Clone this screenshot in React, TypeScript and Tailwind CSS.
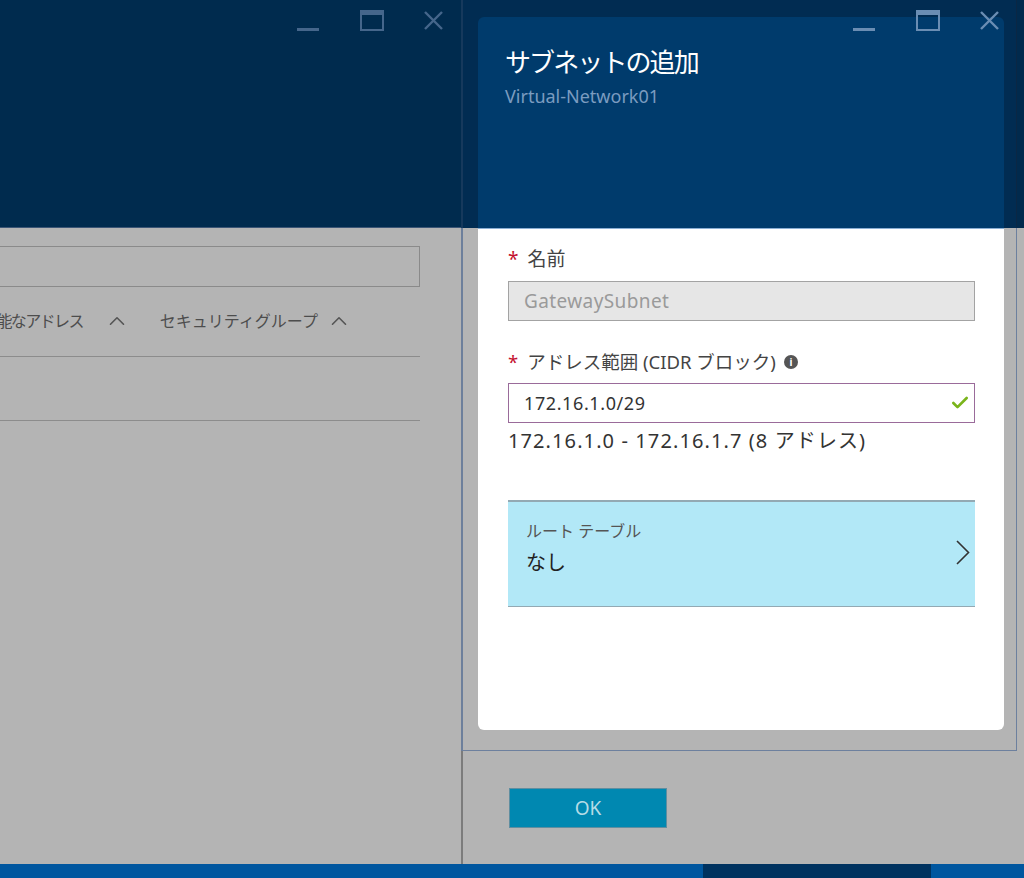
import { ChevronUp, Check } from "lucide-react";

const FONT = "font-['Noto_Sans','Noto_Sans_CJK_JP',sans-serif]";

type Tone = { bar: string; box: string; x: string };

const LEFT_TONE: Tone = {
  bar: "bg-[#45668b]",
  box: "border-[#45668b]",
  x: "text-[#45668b]",
};

const RIGHT_TONE: Tone = {
  bar: "bg-[#6a8db3]",
  box: "border-[#6a8db3]",
  x: "text-[#6a8db3]",
};

function WindowControls({ tone }: { tone: Tone }) {
  return (
    <div className="flex items-start">
      <div className="flex h-[32px] w-[63px] items-end pb-[1px]">
        <div className={`h-[3px] w-[22px] ${tone.bar}`} />
      </div>
      <div className="flex h-[32px] w-[63px] items-start pt-[10px]">
        <div className={`h-[21px] w-[24px] border-2 border-t-[5px] ${tone.box}`} />
      </div>
      <div className="pt-[10px]">
        <svg width="21" height="21" viewBox="0 0 21 21" className={tone.x}>
          <path d="M2 2 L19 19 M19 2 L2 19" stroke="currentColor" strokeWidth="2.4" fill="none" />
        </svg>
      </div>
    </div>
  );
}

function LeftBlade() {
  return (
    <div className="flex w-[461px] shrink-0 flex-col">
      <div className="flex h-[228px] justify-end border-b border-[#3c5676] bg-[#002b4e] pr-[17px]">
        <WindowControls tone={LEFT_TONE} />
      </div>
      <div className="flex-1 bg-[#b4b4b4] pr-[41px] pt-[18px]">
        <div className="h-[41px] border border-l-0 border-[#8a8a8a]" />
        <div className="mt-[22px] flex h-[24px] items-center overflow-hidden text-[16px] text-[#4d4d4d]">
          <span className="-ml-[18px] whitespace-nowrap tracking-[-1.6px]">可能なアドレス</span>
          <ChevronUp className="ml-[21px] h-[26px] w-[26px] shrink-0 text-[#555]" strokeWidth={1.5} />
          <span className="ml-[30px] whitespace-nowrap">セキュリティグループ</span>
          <ChevronUp className="ml-[8px] h-[26px] w-[26px] shrink-0 text-[#555]" strokeWidth={1.5} />
        </div>
        <div className="mt-[23px] h-px bg-[#8c8c8c]" />
        <div className="mt-[63px] h-px bg-[#8c8c8c]" />
      </div>
    </div>
  );
}

function SpotlightCard() {
  return (
    <div className="absolute left-[15px] top-[17px] flex h-[713px] w-[526px] flex-col overflow-hidden rounded-[6px]">
      <div className="h-[211px] bg-[#003b6c] pl-[27px] pt-[27px]">
        <h1 className="text-[26px] leading-[37px] tracking-[-1.9px] text-white">サブネットの追加</h1>
        <p className="mt-[3px] text-[18px] leading-[24px] text-[#7b9cc0]">Virtual-Network01</p>
      </div>
      <div className="flex flex-1 flex-col border-t border-[#8aaed4] bg-white pl-[30px] pr-[29px] pt-[19px]">
        <div className="flex h-[22px] items-center text-[19px] text-[#444]">
          <span className="mr-[9px] text-[#c4122f]">*</span>
          <span>名前</span>
        </div>
        <div className="mt-[11px] flex h-[40px] items-center border border-[#a3a3a3] bg-[#e6e6e6] pl-[15px] text-[19px] tracking-[0.4px] text-[#9a9a9a]">
          GatewaySubnet
        </div>
        <div className="mt-[30px] flex h-[22px] items-center text-[18.5px] text-[#444]">
          <span className="mr-[9px] text-[#c4122f]">*</span>
          <span>アドレス範囲 (CIDR ブロック)</span>
          <span className="ml-[8px] flex h-[14px] w-[14px] items-center justify-center rounded-full bg-[#555] text-[10px] font-bold leading-none text-white">
            i
          </span>
        </div>
        <div className="mt-[10px] flex h-[40px] items-center justify-between border border-[#9a6b9a] bg-white pl-[15px] pr-[4px] text-[18px] tracking-[0.6px] text-[#333]">
          <span>172.16.1.0/29</span>
          <Check className="h-[20px] w-[20px] text-[#7ab41b]" strokeWidth={3.2} />
        </div>
        <div className="mt-[5px] h-[26px] whitespace-nowrap text-[20px] leading-[26px] tracking-[1.1px] text-[#333]">
          172.16.1.0 - 172.16.1.7 (8 アドレス)
        </div>
        <div className="mt-[46px] flex h-[107px] items-start justify-between border-b border-t-2 border-[#93a9b3] bg-[#b2e8f7] pl-[18px] pr-[5px] pt-[19px]">
          <div className="flex flex-col">
            <span className="text-[16px] leading-[20px] text-[#555]">ルート テーブル</span>
            <span className="mt-[9px] text-[20px] leading-[26px] text-[#222]">なし</span>
          </div>
          <svg width="14" height="25" viewBox="0 0 14 25" className="mt-[19px] text-[#333]">
            <path d="M1 1 L12.5 12.5 L1 24" stroke="currentColor" strokeWidth="1.6" fill="none" />
          </svg>
        </div>
      </div>
    </div>
  );
}

function RightBlade() {
  return (
    <div className="relative flex w-[554px] shrink-0 flex-col">
      <div className="flex h-[228px] justify-end border-r border-[#0b2744] bg-[#012c52] pr-[16px]">
        <div className="relative z-10">
          <WindowControls tone={RIGHT_TONE} />
        </div>
      </div>
      <div className="h-[523px] border-b border-r border-[#6d809e] bg-[#b4b4b4]" />
      <div className="flex-1 bg-[#b4b4b4] pl-[46px] pt-[37px]">
        <button className="h-[40px] w-[158px] border border-[#5f8ea0] bg-[#0088b1] text-[19px] text-[#b6dce6]">
          OK
        </button>
      </div>
      <SpotlightCard />
    </div>
  );
}

export default function App() {
  return (
    <div className={`flex h-[878px] w-[1024px] flex-col overflow-hidden bg-[#b4b4b4] ${FONT}`}>
      <div className="flex flex-1">
        <LeftBlade />
        <div className="flex w-[2px] shrink-0 flex-col">
          <div className="h-[228px] bg-[#16395c]" />
          <div className="h-[523px] bg-[#6d7f9b]" />
          <div className="flex-1 bg-[#7c7c7c]" />
        </div>
        <RightBlade />
        <div className="flex flex-1 flex-col">
          <div className="h-[228px] bg-[#012a4d]" />
          <div className="flex-1 bg-[#b4b4b4]" />
        </div>
      </div>
      <div className="flex h-[14px] bg-[#00569f]">
        <div className="ml-[703px] w-[228px] bg-[#00325f]" />
      </div>
    </div>
  );
}
